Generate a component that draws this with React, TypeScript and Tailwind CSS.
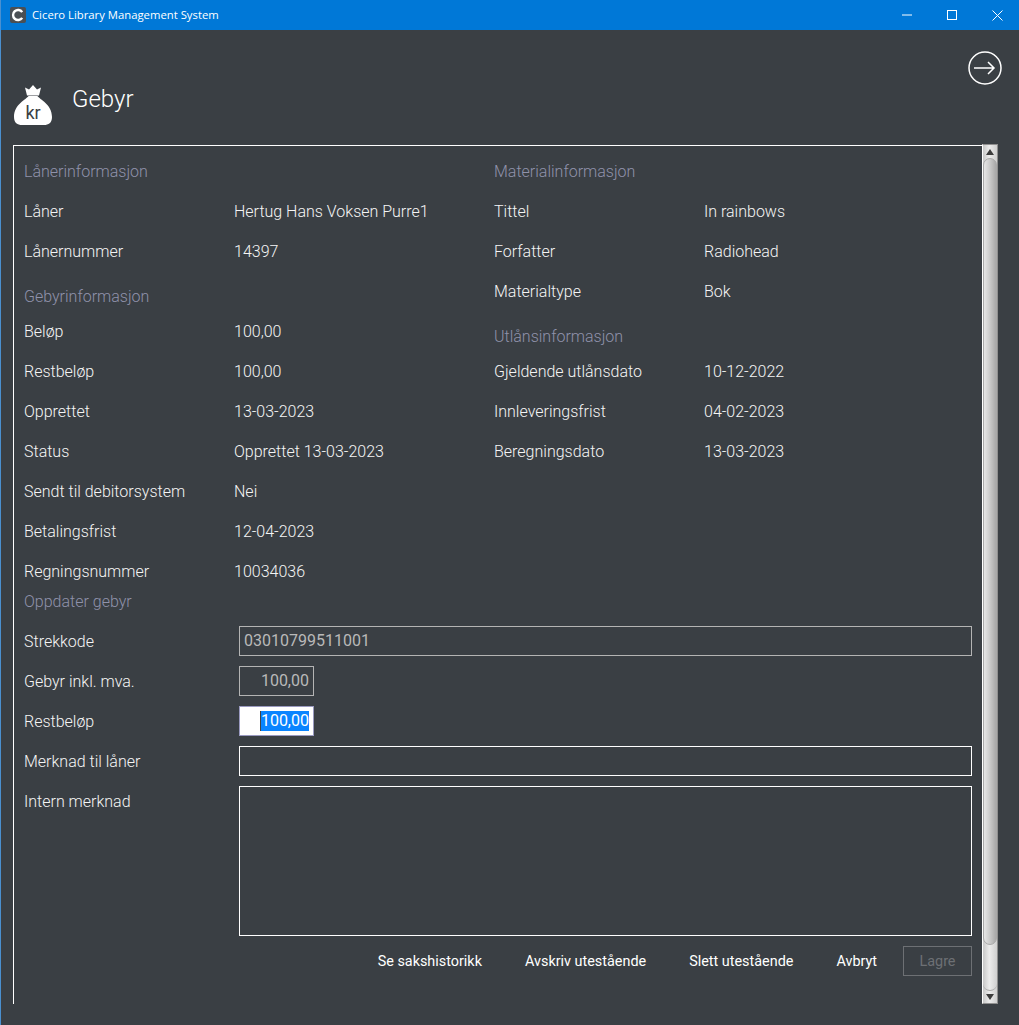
import type { ReactNode } from "react";

const lanerRows = [
  ["Låner", "Hertug Hans Voksen Purre1"],
  ["Lånernummer", "14397"],
];
const gebyrRows = [
  ["Beløp", "100,00"],
  ["Restbeløp", "100,00"],
  ["Opprettet", "13-03-2023"],
  ["Status", "Opprettet 13-03-2023"],
  ["Sendt til debitorsystem", "Nei"],
  ["Betalingsfrist", "12-04-2023"],
  ["Regningsnummer", "10034036"],
];
const materialRows = [
  ["Tittel", "In rainbows"],
  ["Forfatter", "Radiohead"],
  ["Materialtype", "Bok"],
];
const utlanRows = [
  ["Gjeldende utlånsdato", "10-12-2022"],
  ["Innleveringsfrist", "04-02-2023"],
  ["Beregningsdato", "13-03-2023"],
];

function Row({ label, value }: { label: string; value: string }) {
  return (
    <div className="flex h-10 items-center pt-[2px]">
      <span className="w-[210px] shrink-0">{label}</span>
      <span>{value}</span>
    </div>
  );
}

function Heading({ children, className }: { children: ReactNode; className: string }) {
  return <div className={`flex items-center text-[#9092ab] ${className}`}>{children}</div>;
}

function FormRow({ label, children }: { label: string; children: ReactNode }) {
  return (
    <div className="flex h-10 items-center">
      <span className="w-[215px] shrink-0 pt-[2px]">{label}</span>
      {children}
    </div>
  );
}

function MoneyBag() {
  return (
    <svg width="38" height="42" viewBox="0 0 38 42" className="shrink-0">
      <path d="M11 2.500l4 2L19 0l4 4.500 4-2-2 8H13z" fill="#fff" />
      <path
        d="M14.500 11h9c2 3.500 14.500 8 14.500 21 0 6-3.500 8-8 8H8c-4.500 0-8-2-8-8 0-13 12.500-17.500 14.500-21z"
        fill="#fff"
      />
      <text x="19" y="34" textAnchor="middle" fontSize="18" fontWeight="400" fill="#3a3f44" fontFamily="Roboto, sans-serif">
        kr
      </text>
    </svg>
  );
}

function Scrollbar() {
  return (
    <div className="-mt-px flex h-[860px] w-[16px] shrink-0 flex-col border border-[#8f8f8f] border-l-white bg-[linear-gradient(90deg,#c8c8c8,#ececec_45%,#cfcfcf)]">
      <div className="flex h-[13px] shrink-0 items-center justify-center">
        <svg width="8" height="6" viewBox="0 0 8 6">
          <path d="M4 0l4 6H0z" fill="#3c3c3c" />
        </svg>
      </div>
      <div className="flex flex-1 flex-col">
        <div className="h-[787px] rounded-[8px] border border-[#a9a9a9] bg-[linear-gradient(90deg,#e6e6e6,#d0d0d0_40%,#a8a8a8)]" />
        <div className="h-[46px] rounded-b-[8px] border-b border-[#a9a9a9]" />
      </div>
      <div className="flex h-[12px] shrink-0 items-center justify-center">
        <svg width="8" height="6" viewBox="0 0 8 6">
          <path d="M0 0h8L4 6z" fill="#3c3c3c" />
        </svg>
      </div>
    </div>
  );
}

export default function App() {
  return (
    <div className="h-[1025px] w-[1019px] overflow-hidden border-l border-[#4a90d0] bg-[#3a3f44] font-['Roboto',sans-serif] text-[16px] font-light text-[#f5f5f5]">
      {/* Title bar */}
      <div className="flex h-[30px] items-center bg-[#0078d7] pl-[9px] font-normal text-white">
        <svg width="16" height="16" viewBox="0 0 16 16">
          <rect width="16" height="16" rx="2" fill="#4a4f54" />
          <path d="M12.200 5.200A5 5 0 1 0 12.200 10.800" fill="none" stroke="#fff" strokeWidth="2.400" />
        </svg>
        <span className="ml-[6px] font-['Open_Sans',sans-serif] text-[11.300px]">Cicero Library Management System</span>
        <div className="ml-auto flex items-center gap-[35px] pr-[16px]">
          <svg width="10" height="10" viewBox="0 0 10 10">
            <path d="M0 5h10" stroke="#fff" strokeWidth="1" />
          </svg>
          <svg width="10" height="10" viewBox="0 0 10 10">
            <rect x="0.500" y="0.500" width="9" height="9" fill="none" stroke="#fff" strokeWidth="1" />
          </svg>
          <svg width="11" height="11" viewBox="0 0 11 11">
            <path d="M0.500 0.500l10 10M10.500 0.500l-10 10" stroke="#fff" strokeWidth="1" />
          </svg>
        </div>
      </div>

      {/* Header */}
      <div className="flex h-[115px] pl-[13px]">
        <div className="mt-[55px]">
          <MoneyBag />
        </div>
        <h1 className="ml-[20px] mt-[53px] text-[24px] font-light leading-8 text-white">Gebyr</h1>
        <div className="ml-auto mr-[17px] mt-[21px]">
          <svg width="34" height="34" viewBox="0 0 34 34" fill="none" stroke="#fff">
            <circle cx="17" cy="17" r="16" strokeWidth="1.500" />
            <path d="M6 17h20M20 11l6 6-6 6" strokeWidth="1.500" />
          </svg>
        </div>
      </div>

      {/* Panel */}
      <div className="flex pl-3">
        <div className="h-[859px] w-[969px] shrink-0 border-l border-t border-white pl-[10px] pr-[10px] pt-[5px]">
          <div className="flex">
            <div className="w-[470px] shrink-0">
              <Heading className="h-10 pt-[2px]">Lånerinformasjon</Heading>
              {lanerRows.map(([label, value]) => (
                <Row key={label} label={label} value={value} />
              ))}
              <Heading className="h-10 pt-[12px]">Gebyrinformasjon</Heading>
              {gebyrRows.map(([label, value]) => (
                <Row key={label} label={label} value={value} />
              ))}
            </div>
            <div className="flex-1">
              <Heading className="h-10 pt-[2px]">Materialinformasjon</Heading>
              {materialRows.map(([label, value]) => (
                <Row key={label} label={label} value={value} />
              ))}
              <Heading className="h-10 pt-[12px]">Utlånsinformasjon</Heading>
              {utlanRows.map(([label, value]) => (
                <Row key={label} label={label} value={value} />
              ))}
            </div>
          </div>

          <Heading className="h-5 pt-[2px]">Oppdater gebyr</Heading>
          <div className="mt-[10px]">
            <FormRow label="Strekkode">
              <div className="flex h-[30px] flex-1 items-center border border-[#b4b4b4] px-[4px] font-normal text-[#b9b9b9]">
                03010799511001
              </div>
            </FormRow>
            <FormRow label="Gebyr inkl. mva.">
              <div className="flex h-[30px] w-[75px] items-center justify-end border border-[#b4b4b4] px-[4px] font-normal text-[#b9b9b9]">
                100,00
              </div>
            </FormRow>
            <FormRow label="Restbeløp">
              <div className="flex h-[30px] w-[75px] items-center justify-end border border-[#9a9ac0] bg-white px-[4px] font-normal">
                <span className="border-l border-[#444] bg-[#0a84ff] leading-[20px] text-white">100,00</span>
              </div>
            </FormRow>
            <FormRow label="Merknad til låner">
              <div className="h-[30px] flex-1 border border-white" />
            </FormRow>
            <div className="flex">
              <span className="flex h-10 w-[215px] shrink-0 items-center pt-[2px]">Intern merknad</span>
              <div className="mt-[5px] h-[150px] flex-1 border border-white" />
            </div>
          </div>

          <div className="mt-[10px] flex h-[30px] items-center justify-end text-[14.400px] font-normal text-white">
            <span className="pt-[2px]">Se sakshistorikk</span>
            <span className="ml-[43px] pt-[2px]">Avskriv utestående</span>
            <span className="ml-[43px] pt-[2px]">Slett utestående</span>
            <span className="ml-[43px] pt-[2px]">Avbryt</span>
            <div className="ml-[26px] flex h-[30px] w-[69px] items-center justify-center border border-[#6d7074] pt-[1px] text-[#6d7074]">
              Lagre
            </div>
          </div>
        </div>
        <Scrollbar />
      </div>
    </div>
  );
}
